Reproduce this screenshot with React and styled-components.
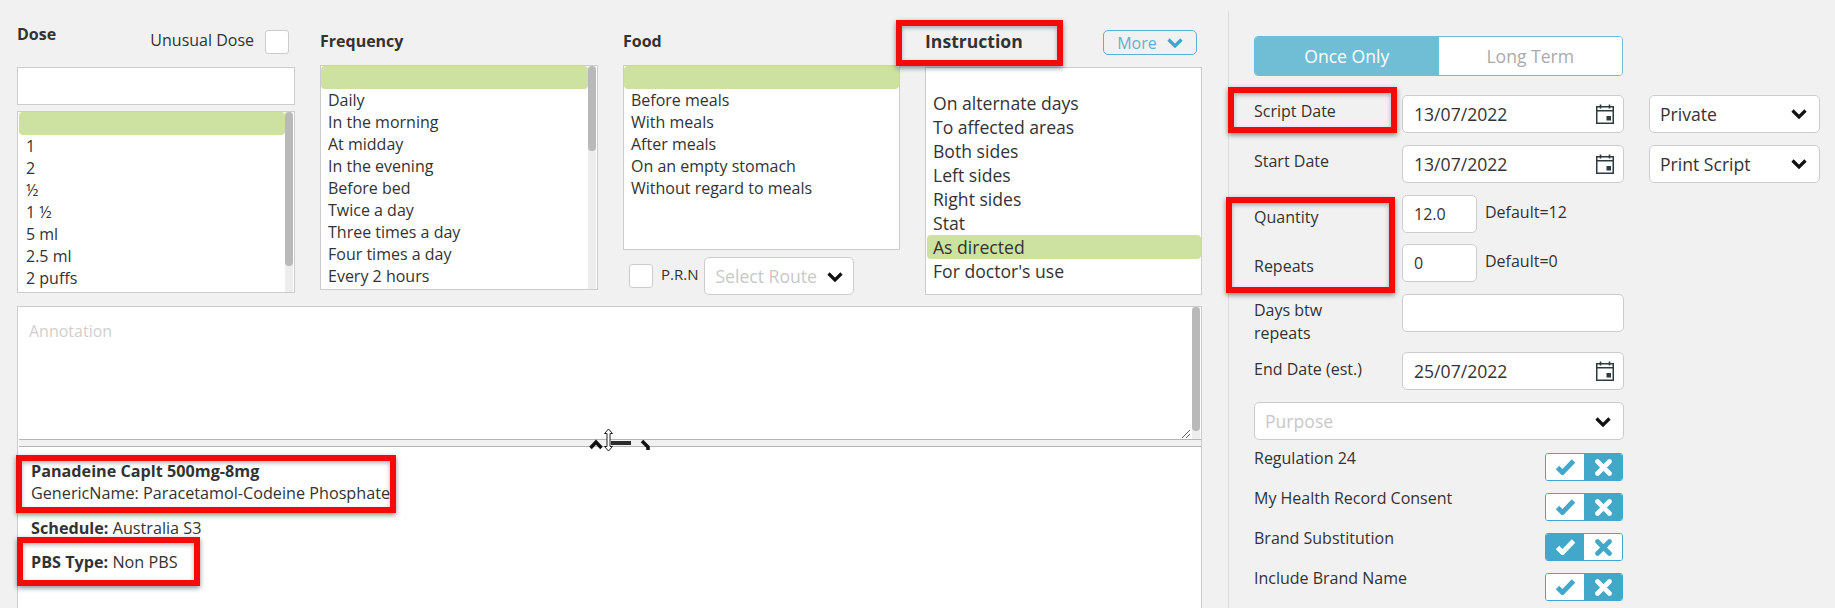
import React from "react";
import styled, { createGlobalStyle } from "styled-components";

const GlobalStyle = createGlobalStyle`
  html, body {
    margin: 0;
    background: #f1f1f1;
    overflow: hidden;
  }
  body {
    font-family: "Open Sans", "Liberation Sans", sans-serif;
    font-size: 16px;
    color: #333;
  }
`;

const Page = styled.div`
  position: relative;
  width: 1835px;
  height: 608px;
  overflow: hidden;
  display: flex;
`;

const LeftSide = styled.div`
  width: 1185px;
  margin-left: 17px;
  display: flex;
  flex-direction: column;
`;

const TopRow = styled.div`
  height: 306px;
  display: grid;
  grid-template-columns: 278px 278px 277px 277px;
  column-gap: 25px;
`;

const Column = styled.div`
  display: flex;
  flex-direction: column;
  position: relative;
`;

const Head = styled.div`
  height: ${(p) => p.$h}px;
  display: flex;
  justify-content: space-between;
  align-items: flex-start;
`;

const Title = styled.div`
  margin-top: ${(p) => p.$top}px;
  font-weight: 700;
  font-size: ${(p) => p.$size || 16}px;
  line-height: 20px;
`;

const CheckRow = styled.div`
  display: flex;
  align-items: flex-start;
  margin-top: ${(p) => p.$top}px;
  margin-right: ${(p) => p.$right || 0}px;
  margin-left: ${(p) => p.$left || 0}px;
  gap: ${(p) => p.$gap || 8}px;
  font-size: ${(p) => p.$size || 16}px;
  line-height: 20px;
`;

const Check = styled.div`
  width: 24px;
  height: 24px;
  box-sizing: border-box;
  background: #fff;
  border: 1px solid #ccc;
  border-radius: 3px;
`;

const PlainBox = styled.div`
  height: 38px;
  box-sizing: border-box;
  background: #fff;
  border: 1px solid #ccc;
  margin-bottom: 6px;
`;

const ListBox = styled.div`
  height: ${(p) => p.$h}px;
  box-sizing: border-box;
  background: #fff;
  border: 1px solid #ccc;
  display: flex;
  overflow: hidden;
`;

const Items = styled.div`
  flex: 1;
  min-width: 0;
  padding-left: ${(p) => p.$inset || 0}px;
`;

const Item = styled.div`
  height: ${(p) => p.$h || 22}px;
  line-height: ${(p) => p.$h || 22}px;
  font-size: ${(p) => p.$size || 16}px;
  padding-left: ${(p) => p.$pad || 7}px;
  background: ${(p) => (p.$selected ? "#cde2a0" : "transparent")};
  border-radius: ${(p) => (p.$selected ? "4px" : 0)};
`;

const Track = styled.div`
  width: 8px;
  margin-right: 1px;
  background: #ededed;
  flex: none;
`;

const Thumb = styled.div`
  height: ${(p) => p.$h}px;
  background: #b9b9b9;
  border-radius: 4px;
`;

const RouteRow = styled.div`
  display: flex;
  align-items: flex-start;
  margin-top: 7px;
`;

const SelectBox = styled.div`
  height: 38px;
  width: ${(p) => p.$w}px;
  box-sizing: border-box;
  background: #fff;
  border: 1px solid #ccc;
  border-radius: 5px;
  display: flex;
  align-items: center;
  justify-content: space-between;
  padding: 0 ${(p) => p.$right || 12}px 0 10px;
  font-size: 17.6px;
  color: ${(p) => (p.$placeholder ? "#c8c8c8" : "#333")};
  margin-left: ${(p) => p.$left || 0}px;
  flex: none;
`;

const MoreButton = styled.div`
  width: 94px;
  height: 25px;
  box-sizing: border-box;
  margin: 30px 5px 0 0;
  border: 1px solid #5fb2cf;
  border-radius: 5px;
  display: flex;
  align-items: center;
  justify-content: center;
  gap: 10px;
  font-size: 16px;
  color: #5fb2cf;
`;

const NotesPanel = styled.div`
  flex: 1;
  background: #fff;
  border: 1px solid #ccc;
  border-bottom: none;
  display: flex;
  flex-direction: column;
`;

const Annotation = styled.div`
  height: 132px;
  display: flex;
  position: relative;
`;

const AnnotationText = styled.div`
  flex: 1;
  padding: 14px 11px;
  line-height: 20px;
  color: #cfcfcf;
`;

const ResizeGrip = styled.svg`
  position: absolute;
  right: 10px;
  bottom: 0;
`;

const Splitter = styled.div`
  position: relative;
  height: 8px;
  box-sizing: border-box;
  margin-left: 1px;
  background: #f1f1f1;
  border-top: 1px solid #b5b5b5;
  border-bottom: 1px solid #b5b5b5;
`;

const SplitterMarks = styled.svg`
  position: absolute;
  left: 570px;
  top: -12px;
`;

const DrugInfo = styled.div`
  padding: 13px;
  font-size: 16.2px;
  line-height: 22px;
  white-space: nowrap;
`;

const Strong = styled.b`
  font-weight: 700;
`;

const InfoLine = styled.div`
  margin-top: ${(p) => p.$top || 0}px;
`;

const RightSide = styled.div`
  width: 607px;
  margin-top: 11px;
  margin-left: 26px;
  border-left: 1px solid #dcdcdc;
  padding: 25px 0 0 25px;
  display: flex;
  flex-direction: column;
`;

const Toggle = styled.div`
  width: 369px;
  height: 40px;
  box-sizing: border-box;
  display: flex;
  border: 1px solid #70bdd6;
  border-radius: 4px;
  overflow: hidden;
  margin-bottom: 19px;
`;

const ToggleSide = styled.div`
  flex: 1;
  display: flex;
  align-items: center;
  justify-content: center;
  font-size: 17.6px;
  background: ${(p) => (p.$active ? "#70bdd6" : "#fff")};
  color: ${(p) => (p.$active ? "#fff" : "#aaa")};
`;

const FormRow = styled.div`
  display: flex;
  align-items: flex-start;
  height: ${(p) => p.$h || 50}px;
`;

const FieldLabel = styled.div`
  width: 148px;
  line-height: 23px;
  padding-top: ${(p) => p.$top || 0}px;
  flex: none;
`;

const Field = styled.div`
  width: ${(p) => p.$w}px;
  height: 38px;
  box-sizing: border-box;
  background: #fff;
  border: 1px solid #ccc;
  border-radius: 5px;
  display: flex;
  align-items: center;
  justify-content: space-between;
  padding: 0 9px 0 11px;
  font-size: ${(p) => p.$size || 17.6}px;
  flex: none;
`;

const Hint = styled.div`
  margin: 7px 0 0 8px;
  line-height: 20px;
`;

const FlagList = styled.div`
  margin-top: 8px;
`;

const FlagRow = styled.div`
  width: 369px;
  height: 40px;
  display: flex;
  justify-content: space-between;
  align-items: flex-start;
`;

const FlagLabel = styled.div`
  line-height: 20px;
`;

const Flag = styled.div`
  width: 78px;
  height: 28px;
  box-sizing: border-box;
  margin-top: 5px;
  display: flex;
  border: 1px solid #41a8c9;
  border-radius: 3px;
  overflow: hidden;
`;

const FlagSide = styled.div`
  flex: 1;
  display: flex;
  align-items: center;
  justify-content: center;
  background: ${(p) => (p.$on ? "#41a8c9" : "#fff")};
  color: ${(p) => (p.$on ? "#fff" : "#41a8c9")};
`;

// red callouts drawn over the screenshot
const Callout = styled.div`
  position: absolute;
  left: ${(p) => p.$x}px;
  top: ${(p) => p.$y}px;
  width: ${(p) => p.$w}px;
  height: ${(p) => p.$h}px;
  box-sizing: border-box;
  border: 6px solid #f50a0a;
  box-shadow: 0 2px 5px rgba(0, 0, 0, 0.45), inset 0 2px 4px rgba(0, 0, 0, 0.3);
`;

const Chevron = ({ color = "#111" }) => (
  <svg width="16" height="11" viewBox="0 0 16 11" fill="none">
    <path d="M1.5 2.5L8 9l6.500-6.500" stroke={color} strokeWidth="3.2" />
  </svg>
);

const CheckMark = () => (
  <svg width="19" height="16" viewBox="0 0 19 16" fill="none">
    <path d="M1.500 8.500l5 5L17.500 2" stroke="currentColor" strokeWidth="4.800" />
  </svg>
);

const CrossMark = () => (
  <svg width="17" height="17" viewBox="0 0 17 17" fill="none">
    <path d="M2.500 2.500l12 12M14.500 2.500l-12 12" stroke="currentColor" strokeWidth="4.600" strokeLinecap="round" />
  </svg>
);

const CalendarIcon = () => (
  <svg width="18" height="20" viewBox="0 0 18 20" fill="none">
    <rect x="0.750" y="2.750" width="16.500" height="16.500" stroke="#2d3a40" strokeWidth="1.500" />
    <path d="M1 6.750h16" stroke="#2d3a40" strokeWidth="1.500" />
    <path d="M4.500 0.500v4M13.500 0.500v4" stroke="#2d3a40" strokeWidth="1.600" />
    <rect x="10.500" y="12" width="4.500" height="4.500" fill="#2d3a40" />
  </svg>
);

const doses = ["1", "2", "½", "1 ½", "5 ml", "2.5 ml", "2 puffs"];
const frequencies = ["Daily", "In the morning", "At midday", "In the evening", "Before bed", "Twice a day", "Three times a day", "Four times a day", "Every 2 hours"];
const foods = ["Before meals", "With meals", "After meals", "On an empty stomach", "Without regard to meals"];
const instructions = ["On alternate days", "To affected areas", "Both sides", "Left sides", "Right sides", "Stat", "As directed", "For doctor's use"];
const flags = [
  { label: "Regulation 24", on: false },
  { label: "My Health Record Consent", on: false },
  { label: "Brand Substitution", on: true },
  { label: "Include Brand Name", on: false },
];

export default function App() {
  return (
    <Page>
      <GlobalStyle />
      <LeftSide>
        <TopRow>
          <Column>
            <Head $h={67}>
              <Title $top={24}>Dose</Title>
              <CheckRow $top={30} $right={6} $gap={11}>
                <span>Unusual Dose</span>
                <Check />
              </CheckRow>
            </Head>
            <PlainBox />
            <ListBox $h={182}>
              <Items $inset={1}>
                <Item $selected $h={23} />
                {doses.map((d) => (
                  <Item key={d}>{d}</Item>
                ))}
              </Items>
              <Track>
                <Thumb $h={154} />
              </Track>
            </ListBox>
          </Column>

          <Column>
            <Head $h={65}>
              <Title $top={31}>Frequency</Title>
            </Head>
            <ListBox $h={225}>
              <Items>
                <Item $selected $h={23} />
                {frequencies.map((f) => (
                  <Item key={f}>{f}</Item>
                ))}
              </Items>
              <Track>
                <Thumb $h={85} />
              </Track>
            </ListBox>
          </Column>

          <Column>
            <Head $h={65}>
              <Title $top={31}>Food</Title>
            </Head>
            <ListBox $h={185}>
              <Items>
                <Item $selected $h={23} />
                {foods.map((f) => (
                  <Item key={f}>{f}</Item>
                ))}
              </Items>
            </ListBox>
            <RouteRow>
              <CheckRow $top={7} $left={6} $size={15}>
                <Check />
                <span>P.R.N</span>
              </CheckRow>
              <SelectBox $w={150} $placeholder $left={6} $right={10}>
                Select Route
                <Chevron />
              </SelectBox>
            </RouteRow>
          </Column>

          <Column>
            <Head $h={67}>
              <Title $top={31} $size={17.6}>Instruction</Title>
              <MoreButton>
                More
                <Chevron color="#3fa6c9" />
              </MoreButton>
            </Head>
            <ListBox $h={228}>
              <Items $inset={1}>
                <Item $h={23} />
                {instructions.map((i) => (
                  <Item key={i} $h={24} $size={17.6} $pad={6} $selected={i === "As directed"}>
                    {i}
                  </Item>
                ))}
              </Items>
            </ListBox>
          </Column>
        </TopRow>

        <NotesPanel>
          <Annotation>
            <AnnotationText>Annotation</AnnotationText>
            <ResizeGrip width="10" height="10" viewBox="0 0 10 10">
              <path d="M9 1L1 9M9 5L5 9" stroke="#666" strokeWidth="1" />
            </ResizeGrip>
            <Track>
              <Thumb $h={124} />
            </Track>
          </Annotation>
          <Splitter>
            <SplitterMarks width="64" height="24" viewBox="0 0 64 24">
              <path d="M1.500 20l5.500-6 5.500 6" fill="none" stroke="#111" strokeWidth="3.500" />
              <path d="M22 13h20v4H22z" fill="#2b2b2b" />
              <path d="M53 13l6 6v3" fill="none" stroke="#111" strokeWidth="3.500" />
              <path
                d="M19.500 1l4 4.500H21v13h2.500l-4 4.500-4-4.500H18v-13h-2.500z"
                fill="#fff"
                stroke="#222"
                strokeWidth="1"
              />
            </SplitterMarks>
          </Splitter>
          <DrugInfo>
            <InfoLine>
              <Strong>Panadeine Caplt 500mg-8mg</Strong>
            </InfoLine>
            <InfoLine>GenericName: Paracetamol-Codeine Phosphate</InfoLine>
            <InfoLine $top={13}>
              <Strong>Schedule:</Strong> Australia S3
            </InfoLine>
            <InfoLine $top={12}>
              <Strong>PBS Type:</Strong> Non PBS
            </InfoLine>
          </DrugInfo>
        </NotesPanel>
      </LeftSide>

      <RightSide>
        <Toggle>
          <ToggleSide $active>Once Only</ToggleSide>
          <ToggleSide>Long Term</ToggleSide>
        </Toggle>

        <FormRow>
          <FieldLabel $top={5}>Script Date</FieldLabel>
          <Field $w={222}>
            13/07/2022
            <CalendarIcon />
          </Field>
          <SelectBox $w={171} $left={25}>
            Private
            <Chevron />
          </SelectBox>
        </FormRow>
        <FormRow>
          <FieldLabel $top={5}>Start Date</FieldLabel>
          <Field $w={222}>
            13/07/2022
            <CalendarIcon />
          </Field>
          <SelectBox $w={171} $left={25}>
            Print Script
            <Chevron />
          </SelectBox>
        </FormRow>
        <FormRow>
          <FieldLabel $top={11}>Quantity</FieldLabel>
          <Field $w={75} $size={16}>12.0</Field>
          <Hint>Default=12</Hint>
        </FormRow>
        <FormRow>
          <FieldLabel $top={11}>Repeats</FieldLabel>
          <Field $w={75} $size={16}>0</Field>
          <Hint>Default=0</Hint>
        </FormRow>
        <FormRow $h={58}>
          <FieldLabel $top={5}>
            Days btw
            <br />
            repeats
          </FieldLabel>
          <Field $w={222} />
        </FormRow>
        <FormRow>
          <FieldLabel $top={6}>End Date (est.)</FieldLabel>
          <Field $w={222}>
            25/07/2022
            <CalendarIcon />
          </Field>
        </FormRow>
        <SelectBox $w={370} $placeholder>
          Purpose
          <Chevron />
        </SelectBox>
        <FlagList>
          {flags.map((f) => (
            <FlagRow key={f.label}>
              <FlagLabel>{f.label}</FlagLabel>
              <Flag>
                <FlagSide $on={f.on}>
                  <CheckMark />
                </FlagSide>
                <FlagSide $on={!f.on}>
                  <CrossMark />
                </FlagSide>
              </Flag>
            </FlagRow>
          ))}
        </FlagList>
      </RightSide>

      <Callout $x={896} $y={20} $w={167} $h={46} />
      <Callout $x={1228} $y={87} $w={169} $h={46} />
      <Callout $x={1226} $y={197} $w={169} $h={96} />
      <Callout $x={16} $y={455} $w={380} $h={58} />
      <Callout $x={17} $y={537} $w={183} $h={49} />
    </Page>
  );
}
